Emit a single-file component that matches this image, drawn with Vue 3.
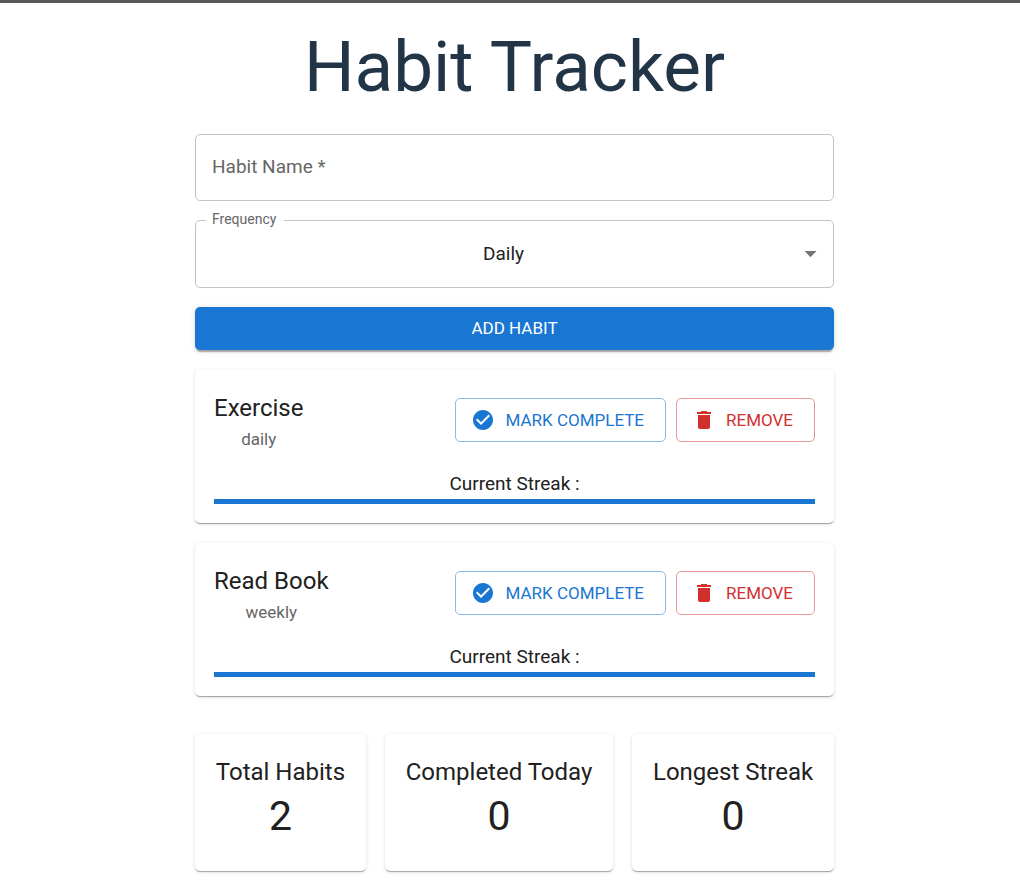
<script setup>
import { ref, computed } from 'vue'

const name = ref('')
const frequency = ref('daily')
const habits = ref([
  { id: 1, name: 'Exercise', frequency: 'daily', done: false },
  { id: 2, name: 'Read Book', frequency: 'weekly', done: false },
])
const stats = computed(() => [
  { label: 'Total Habits', value: habits.value.length },
  { label: 'Completed Today', value: habits.value.filter((h) => h.done).length },
  { label: 'Longest Streak', value: 0 },
])

function addHabit() {
  if (!name.value.trim()) return
  habits.value.push({ id: Date.now(), name: name.value, frequency: frequency.value, done: false })
  name.value = ''
}
function removeHabit(id) {
  habits.value = habits.value.filter((h) => h.id !== id)
}
</script>

<template>
  <div class="page">
    <main class="container">
      <h1 class="title">Habit Tracker</h1>

      <form class="form" @submit.prevent="addHabit">
        <div class="field">
          <input id="habit-name" v-model="name" class="control" type="text" />
          <label v-show="!name" class="label" for="habit-name">Habit Name *</label>
        </div>
        <div class="field">
          <select id="frequency" v-model="frequency" class="control select">
            <option value="daily">Daily</option>
            <option value="weekly">Weekly</option>
          </select>
          <label class="label raised" for="frequency">Frequency</label>
          <svg class="arrow" viewBox="0 0 24 24" aria-hidden="true"><path d="M7 10l5 5 5-5z" /></svg>
        </div>
        <button class="btn primary" type="submit">ADD HABIT</button>
      </form>

      <section class="habits">
        <article v-for="habit in habits" :key="habit.id" class="card">
          <div class="row">
            <div class="info">
              <h2 class="heading">{{ habit.name }}</h2>
              <p class="freq">{{ habit.frequency }}</p>
            </div>
            <div class="actions">
              <button class="btn outlined blue" type="button" @click="habit.done = true">
                <svg class="icon" viewBox="0 0 24 24" aria-hidden="true">
                  <path d="M12 2C6.48 2 2 6.48 2 12s4.48 10 10 10 10-4.48 10-10S17.52 2 12 2zm-2 15-5-5 1.410-1.410L10 14.170l7.590-7.590L19 8l-9 9z" />
                </svg>
                MARK COMPLETE
              </button>
              <button class="btn outlined red" type="button" @click="removeHabit(habit.id)">
                <svg class="icon" viewBox="0 0 24 24" aria-hidden="true">
                  <path d="M6 19c0 1.100.900 2 2 2h8c1.100 0 2-.900 2-2V7H6v12zM19 4h-3.500l-1-1h-5l-1 1H5v2h14V4z" />
                </svg>
                REMOVE
              </button>
            </div>
          </div>
          <p class="streak-text">Current Streak :</p>
          <div class="bar"></div>
        </article>
      </section>

      <section class="stats">
        <div v-for="stat in stats" :key="stat.label" class="card stat">
          <h2 class="heading">{{ stat.label }}</h2>
          <p class="value">{{ stat.value }}</p>
        </div>
      </section>
    </main>
  </div>
</template>

<style>
body {
  background: #fff;
}
</style>

<style scoped>
.page {
  border-top: 3px solid #58585c;
  padding: 22px 0 18px 9px;
  font-family: Roboto, sans-serif;
  color: #212121;
}
.page * {
  box-sizing: border-box;
}
.container {
  max-width: 639px;
  margin: 0 auto;
  text-align: center;
}
h1,
h2,
p {
  margin: 0;
  font-weight: 400;
}
.title {
  font-size: 71px;
  line-height: 84px;
  color: #213547;
  margin-bottom: 25px;
}
.form,
.habits {
  display: flex;
  flex-direction: column;
  gap: 19px;
}
.form {
  margin-bottom: 20px;
}
.habits {
  gap: 20px;
}
.field {
  position: relative;
}
.control {
  display: block;
  width: 100%;
  height: 67px;
  margin: 0;
  padding: 0 17px;
  border: 1px solid #c4c4c4;
  border-radius: 5px;
  background: #fff;
  color: #212121;
  font: 400 19px/28px Roboto, sans-serif;
  appearance: none;
}
.select {
  height: 68px;
  padding-right: 39px;
  text-align-last: center;
}
.label {
  position: absolute;
  left: 17px;
  top: 19px;
  font-size: 19px;
  line-height: 28px;
  color: #666;
  pointer-events: none;
}
.raised {
  left: 11px;
  top: -11px;
  padding: 0 8px 0 6px;
  background: #fff;
  font-size: 14px;
  line-height: 20px;
}
.arrow {
  position: absolute;
  right: 9px;
  top: 19px;
  width: 29px;
  height: 29px;
  fill: #757575;
  pointer-events: none;
}
.btn {
  display: inline-flex;
  align-items: center;
  justify-content: center;
  gap: 10px;
  height: 44px;
  border-radius: 5px;
  font: 400 17px/30px Roboto, sans-serif;
  white-space: nowrap;
  cursor: pointer;
}
.primary {
  height: 43px;
  padding: 0 0 2px;
  border: 0;
  background: #1976d2;
  color: #fff;
  box-shadow: 0 4px 1px -2px rgba(0, 0, 0, 0.2), 0 2px 2px 0 rgba(0, 0, 0, 0.14), 0 1px 6px 0 rgba(0, 0, 0, 0.12);
}
.outlined {
  padding: 0 21px 0 15px;
  background: #fff;
}
.blue {
  border: 1px solid #8cbae8;
  color: #1976d2;
}
.red {
  border: 1px solid #e99797;
  color: #d32f2f;
}
.icon {
  width: 24px;
  height: 24px;
  fill: currentColor;
}
.card {
  padding: 19px;
  border-radius: 5px;
  background: #fff;
  box-shadow: 0 2px 1px -1px rgba(0, 0, 0, 0.2), 0 1px 1px 0 rgba(0, 0, 0, 0.14), 0 1px 4px 0 rgba(0, 0, 0, 0.12);
}
.row {
  display: flex;
  align-items: center;
  justify-content: space-between;
  margin-bottom: 18px;
}
.heading {
  font-size: 24px;
  line-height: 38px;
}
.freq {
  font-size: 17px;
  line-height: 24px;
  color: #666;
}
.actions {
  display: flex;
  gap: 10px;
}
.streak-text {
  margin-bottom: 1px;
  font-size: 19px;
  line-height: 29px;
}
.bar {
  height: 5px;
  background: #1976d2;
}
.stats {
  display: flex;
  gap: 19px;
  margin-top: 38px;
}
.stat {
  flex: 1 1 auto;
  padding-bottom: 30px;
}
.value {
  font-size: 41px;
  line-height: 50px;
}
</style>
